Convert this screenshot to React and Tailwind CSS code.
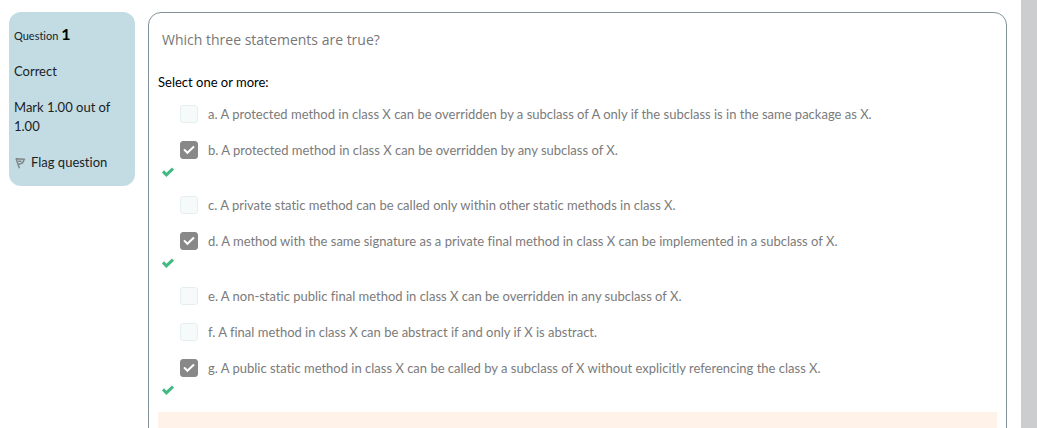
import React from "react";

const answers = [
  { id: "a", text: "A protected method in class X can be overridden by a subclass of A only if the subclass is in the same package as X." },
  { id: "b", text: "A protected method in class X can be overridden by any subclass of X.", correct: true },
  { id: "c", text: "A private static method can be called only within other static methods in class X." },
  { id: "d", text: "A method with the same signature as a private final method in class X can be implemented in a subclass of X.", correct: true },
  { id: "e", text: "A non-static public final method in class X can be overridden in any subclass of X." },
  { id: "f", text: "A final method in class X can be abstract if and only if X is abstract." },
  { id: "g", text: "A public static method in class X can be called by a subclass of X without explicitly referencing the class X.", correct: true },
];

function Tick({ className }) {
  return (
    <svg viewBox="0 0 12 9" className={className} fill="none" stroke="currentColor" aria-hidden="true">
      <path d="M1 3.4 4.4 6.8 11 .6" />
    </svg>
  );
}

function Answer({ id, text, correct }) {
  return (
    <li>
      <div className="flex h-9 items-center gap-2.5 pl-[22px]">
        <span className="grid size-[18px] shrink-0">
          <input
            id={"answer-" + id}
            type="checkbox"
            defaultChecked={correct}
            className="peer col-start-1 row-start-1 size-[18px] appearance-none rounded-[3px] border border-[#e6efef] bg-[#f6fafa] checked:border-[#888888] checked:bg-[#888888]"
          />
          <Tick className="pointer-events-none col-start-1 row-start-1 hidden w-3 self-center justify-self-center overflow-visible stroke-2 text-white peer-checked:block" />
        </span>
        <label htmlFor={"answer-" + id} className="whitespace-nowrap">
          {id}. {text}
        </label>
      </div>
      {correct && (
        <div className="h-[19px] pl-1">
          <Tick className="w-3 overflow-visible stroke-3 text-[#42b983]" />
        </div>
      )}
    </li>
  );
}

export default function App() {
  return (
    <div className="flex h-screen overflow-hidden bg-white font-['Lato','Liberation_Sans',sans-serif] text-[13px] leading-5 text-[#1a2226] [font-variant-ligatures:none]">
      <div className="flex min-w-0 flex-1 items-start gap-[13px] pt-3 pr-3.5 pl-[9px]">
        <aside className="flex w-[126px] shrink-0 flex-col gap-[17px] rounded-xl bg-[#c3dce3] px-[5px] pt-3 pb-3.5 leading-[19px]">
          <h3 className="text-[11px] leading-[19px]">
            Question <span className="text-base leading-[19px] font-bold text-black">1</span>
          </h3>
          <p>Correct</p>
          <p>Mark 1.00 out of 1.00</p>
          <a href="#flag" className="flex items-center gap-1">
            <svg viewBox="0 0 13 13" className="size-[13px] text-[#7e8688]" fill="none" stroke="currentColor" strokeWidth="1.5" strokeLinejoin="round" aria-hidden="true">
              <path d="M2 2.6 5.4 12.2M2 2.8 10.4 3.2 8.6 6.8 4.4 8.6M4.2 5.2 7.4 5.2" />
            </svg>
            Flag question
          </a>
        </aside>
        <main className="min-w-0 flex-1 rounded-[13px] border border-[#82929a] px-[9px] pt-[17px]">
          <h2 className="pl-1 font-['Open_Sans','Noto_Sans',sans-serif] text-sm leading-5 text-[#777777]">
            Which three statements are true?
          </h2>
          <p className="mt-[22px] text-black">Select one or more:</p>
          <ul className="mt-1 text-[#7b7b7b]">
            {answers.map((answer) => (
              <Answer key={answer.id} {...answer} />
            ))}
          </ul>
          <div className="mt-[7px] h-24 bg-[#fff3e9]" />
        </main>
      </div>
      <div className="w-4 shrink-0 bg-[#cccdcf]" />
    </div>
  );
}
